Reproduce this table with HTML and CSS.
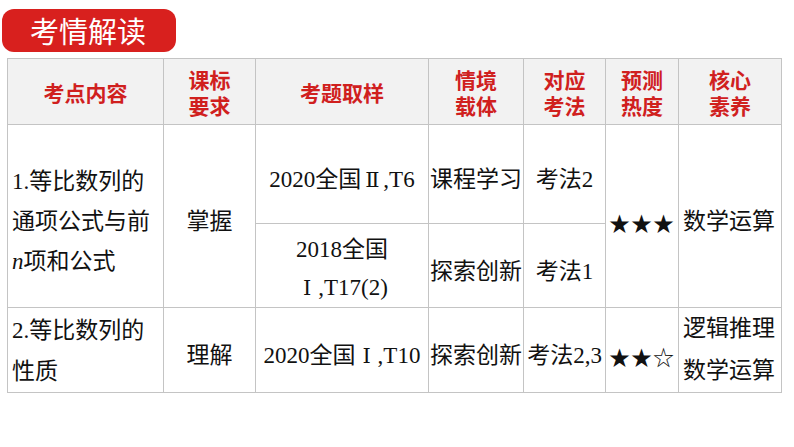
FILE: index.html
```html
<!DOCTYPE html>
<html lang="zh-CN">
<head>
<meta charset="utf-8">
<link rel="stylesheet" href="styles.css">
</head>
<body>
<div class="page">
  <div class="badge">考情解读</div>
  <table class="grid">
    <colgroup>
      <col class="c1"><col class="c2"><col class="c3"><col class="c4"><col class="c5"><col class="c6"><col class="c7">
    </colgroup>
    <thead>
      <tr class="head">
        <th>考点内容</th>
        <th>课标<br>要求</th>
        <th>考题取样</th>
        <th>情境<br>载体</th>
        <th>对应<br>考法</th>
        <th>预测<br>热度</th>
        <th>核心<br>素养</th>
      </tr>
    </thead>
    <tbody>
      <tr class="r1">
        <td rowspan="2" class="left">1.等比数列的<br>通项公式与前<br><i>n</i>项和公式</td>
        <td rowspan="2">掌握</td>
        <td>2020全国<span class="rn">Ⅱ</span>,T6</td>
        <td>课程学习</td>
        <td>考法2</td>
        <td rowspan="2" class="stars">★★★</td>
        <td rowspan="2" class="left">数学运算</td>
      </tr>
      <tr class="r2">
        <td class="two">2018全国<br><span class="rn">Ⅰ</span>,T17(2)</td>
        <td>探索创新</td>
        <td>考法1</td>
      </tr>
      <tr class="r3">
        <td class="left two-b">2.等比数列的<br>性质</td>
        <td>理解</td>
        <td>2020全国<span class="rn">Ⅰ</span>,T10</td>
        <td>探索创新</td>
        <td>考法2,3</td>
        <td class="stars">★★☆</td>
        <td class="left two-c">逻辑推理<br>数学运算</td>
      </tr>
    </tbody>
  </table>
</div>
</body>
</html>
```

FILE: styles.css
```css
html, body {
  margin: 0;
  padding: 0;
  background: #ffffff;
}

.page {
  padding: 9px 0 0 2px;
}

.badge {
  width: 174px;
  height: 43px;
  box-sizing: border-box;
  background: #d8201e;
  border-radius: 12px;
  color: #ffffff;
  font-family: "Noto Sans CJK SC", sans-serif;
  font-size: 29px;
  line-height: 43px;
  padding-left: 28px;
}

.grid {
  margin: 6px 0 0 5px;
  border-collapse: collapse;
  table-layout: fixed;
  width: 775px;
  font-family: "Liberation Serif", "Noto Sans CJK SC", serif;
  font-size: 23px;
  color: #111111;
}

.c1 { width: 156px; }
.c2 { width: 92px; }
.c3 { width: 173px; }
.c4 { width: 95px; }
.c5 { width: 82px; }
.c6 { width: 73px; }
.c7 { width: 103px; }

.grid th,
.grid td {
  border: 1px solid #c4c4c4;
  padding: 0;
  text-align: center;
  vertical-align: middle;
  white-space: nowrap;
}

.grid th {
  background: #f2f2f2;
  color: #d0201e;
  font-family: "Noto Sans CJK SC", sans-serif;
  font-weight: 700;
  font-size: 21px;
  line-height: 26px;
  height: 65px;
}

.grid td {
  line-height: 40px;
  padding-top: 12px;
}

.grid td.left {
  text-align: left;
  padding-left: 4px;
}

.grid td.two {
  line-height: 38px;
  padding-top: 7px;
}

.grid td.two-b {
  line-height: 41px;
  padding-top: 2px;
}

.grid td.two-c {
  line-height: 42px;
  padding-top: 0;
}

.grid td.stars {
  font-family: "Noto Sans CJK SC", sans-serif;
  font-size: 21px;
  letter-spacing: 1px;
}

.rn {
  display: inline-block;
  width: 22px;
  text-align: center;
  font-family: "DejaVu Serif", "Liberation Serif", serif;
  font-size: 21px;
}

.grid i {
  font-family: "Liberation Serif", serif;
  font-style: italic;
}

.r1 td { height: 86px; }
.r2 td { height: 71px; }
.r3 td { height: 71px; }
```
